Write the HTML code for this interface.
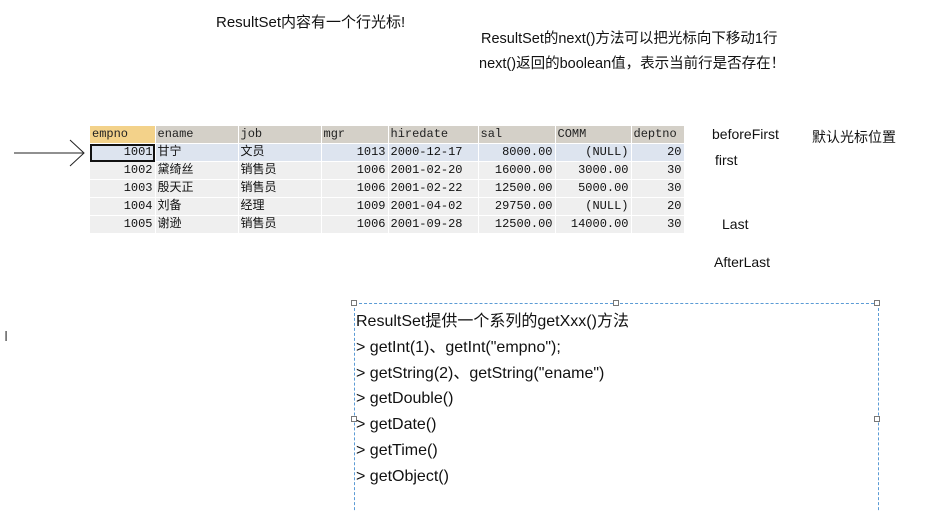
<!DOCTYPE html>
<html><head><meta charset="utf-8"><style>
html,body{margin:0;width:933px;height:511px;overflow:hidden}
body{background:#fff;position:relative;font-family:"Liberation Sans","Noto Sans CJK SC",sans-serif;color:#111}
.t{position:absolute;font-size:15px;line-height:18px;white-space:nowrap}
table{position:absolute;left:90px;top:126px;border-collapse:collapse;font-family:"Liberation Mono","Noto Sans CJK SC",monospace;font-size:12px}
td{height:17px;padding:0 2px;border:1px solid #fff;border-width:0 1px 1px 0;line-height:17px;white-space:nowrap}
tr.h td{background:#d4d0c8;color:#222;border-right:1px solid #fff}
tr.h td:first-child{background:#f3d28a}
tr td{background:#efefef}
tr.r1 td{background:#dde4ef}
.n{text-align:right}
.box{position:absolute;left:354px;top:303px;width:523px;height:220px;border:1px dashed #5b9bd5}
.hd{position:absolute;width:4px;height:4px;border:1px solid #777;background:#fff}
.b{position:absolute;left:356px;font-size:16px;line-height:20px;white-space:nowrap}
</style></head><body>
<div class="t" style="left:216px;top:14px">ResultSet内容有一个行光标!</div>
<div class="t" style="left:481px;top:30px;font-size:14.5px">ResultSet的next()方法可以把光标向下移动1行</div>
<div class="t" style="left:479px;top:55px;font-size:14.5px">next()返回的boolean值，表示当前行是否存在！</div>
<div class="t" style="left:712px;top:125px;font-size:14px">beforeFirst</div>
<div class="t" style="left:812px;top:128px;font-size:14px">默认光标位置</div>
<div class="t" style="left:715px;top:151px;font-size:14px">first</div>
<div class="t" style="left:722px;top:215px;font-size:14px">Last</div>
<div class="t" style="left:714px;top:253px;font-size:14px">AfterLast</div>
<svg style="position:absolute;left:14px;top:138px" width="72" height="32"><path d="M0 15 H70 M56 2 L70 15 L56 28" stroke="#222" fill="none" stroke-width="1"/></svg>
<div class="t" style="left:4px;top:328px;color:#555">I</div>
<table>
<colgroup><col style="width:65px"><col style="width:83px"><col style="width:83px"><col style="width:67px"><col style="width:90px"><col style="width:77px"><col style="width:76px"><col style="width:53px"></colgroup>
<tr class="h"><td>empno</td><td>ename</td><td>job</td><td>mgr</td><td>hiredate</td><td>sal</td><td>COMM</td><td>deptno</td></tr>
<tr class="r1"><td class="n" style="outline:2px solid #111;outline-offset:-2px">1001</td><td>甘宁</td><td>文员</td><td class="n">1013</td><td>2000-12-17</td><td class="n">8000.00</td><td class="n">(NULL)</td><td class="n">20</td></tr>
<tr><td class="n">1002</td><td>黛绮丝</td><td>销售员</td><td class="n">1006</td><td>2001-02-20</td><td class="n">16000.00</td><td class="n">3000.00</td><td class="n">30</td></tr>
<tr><td class="n">1003</td><td>殷天正</td><td>销售员</td><td class="n">1006</td><td>2001-02-22</td><td class="n">12500.00</td><td class="n">5000.00</td><td class="n">30</td></tr>
<tr><td class="n">1004</td><td>刘备</td><td>经理</td><td class="n">1009</td><td>2001-04-02</td><td class="n">29750.00</td><td class="n">(NULL)</td><td class="n">20</td></tr>
<tr><td class="n">1005</td><td>谢逊</td><td>销售员</td><td class="n">1006</td><td>2001-09-28</td><td class="n">12500.00</td><td class="n">14000.00</td><td class="n">30</td></tr>
</table>
<div class="box"></div>
<div class="hd" style="left:351px;top:300px"></div>
<div class="hd" style="left:613px;top:300px"></div>
<div class="hd" style="left:874px;top:300px"></div>
<div class="hd" style="left:351px;top:416px"></div>
<div class="hd" style="left:874px;top:416px"></div>
<div class="b" style="top:312px">ResultSet提供一个系列的getXxx()方法</div>
<div class="b" style="top:338px">&gt; getInt(1)、getInt("empno");</div>
<div class="b" style="top:364px">&gt; getString(2)、getString("ename")</div>
<div class="b" style="top:389px">&gt; getDouble()</div>
<div class="b" style="top:415px">&gt; getDate()</div>
<div class="b" style="top:441px">&gt; getTime()</div>
<div class="b" style="top:467px">&gt; getObject()</div>
</body></html>
